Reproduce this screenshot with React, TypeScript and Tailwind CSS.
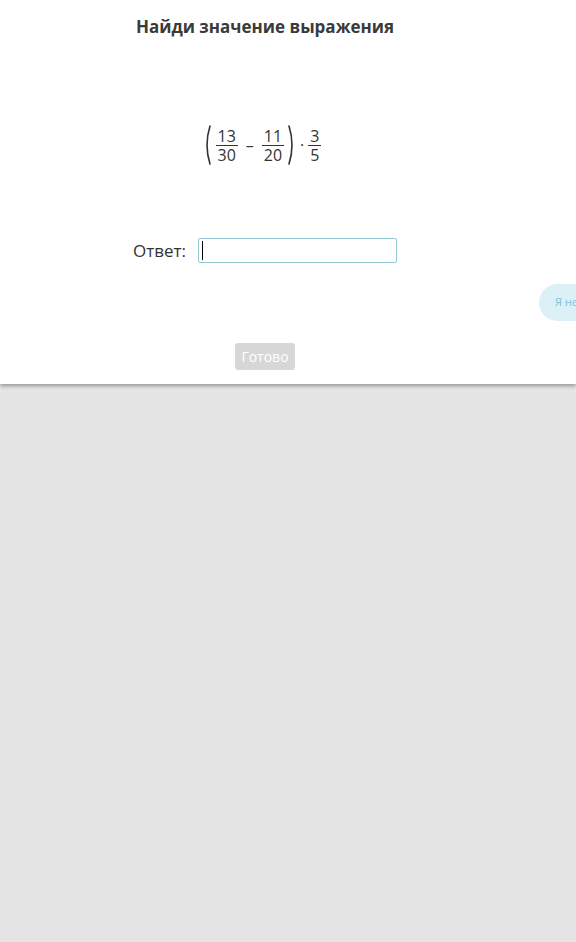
import React from 'react';

function Paren({ side }: { side: 'left' | 'right' }) {
  const d = side === 'left' ? 'M7 1 Q1 20 7 39' : 'M1 1 Q7 20 1 39';
  return (
    <svg width="8" height="40" viewBox="0 0 8 40" className="shrink-0">
      <path d={d} fill="none" stroke="#333" strokeWidth="1.6" strokeLinecap="round" />
    </svg>
  );
}

function Frac({ top, bottom }: { top: string; bottom: string }) {
  return (
    <div className="flex flex-col items-stretch text-[16px] text-[#333]">
      <span className="px-[2px] text-center leading-[18px]">{top}</span>
      <span className="h-px bg-[#333]" />
      <span className="px-[2px] text-center leading-[18px]">{bottom}</span>
    </div>
  );
}

export default function App() {
  return (
    <div
      className="min-h-[942px] overflow-hidden bg-[#e4e5e4]"
      style={{ fontFamily: '"Open Sans", sans-serif' }}
    >
      <div className="relative h-[384px] bg-white shadow-[0_2px_4px_rgba(0,0,0,0.35)]">
        <div className="flex w-[530px] flex-col items-center pt-[15px]">
          <h1 className="text-[17px] font-bold leading-[24px] text-[#3a3a3a]">
            Найди значение выражения
          </h1>

          <div className="mr-[6px] mt-[86px] flex items-center text-[#333]">
            <Paren side="left" />
            <div className="ml-[5px]">
              <Frac top="13" bottom="30" />
            </div>
            <span className="mx-[8px] text-[16px]">–</span>
            <Frac top="11" bottom="20" />
            <div className="ml-[4px]">
              <Paren side="right" />
            </div>
            <span className="mx-[4px] text-[16px]">·</span>
            <Frac top="3" bottom="5" />
          </div>

          <div className="mt-[73px] flex items-center gap-[12px]">
            <span className="text-[17px] leading-[20px] text-[#333]">Ответ:</span>
            <div className="flex h-[25px] w-[199px] items-center rounded-[2px] border border-[#94c8d6] pl-[3px]">
              <span className="h-[19px] w-px bg-black" />
            </div>
          </div>

          <button className="mt-[80px] h-[27px] w-[60px] rounded-[3px] bg-[#d7d7d7] text-[14px] text-white">
            Готово
          </button>
        </div>

        <div className="absolute left-[539px] top-[284px] flex h-[37px] items-center whitespace-nowrap rounded-full bg-[#dcf0f8] px-[16px] text-[11px] text-[#7fc1d8]">
          Я не знаю
        </div>
      </div>
    </div>
  );
}
